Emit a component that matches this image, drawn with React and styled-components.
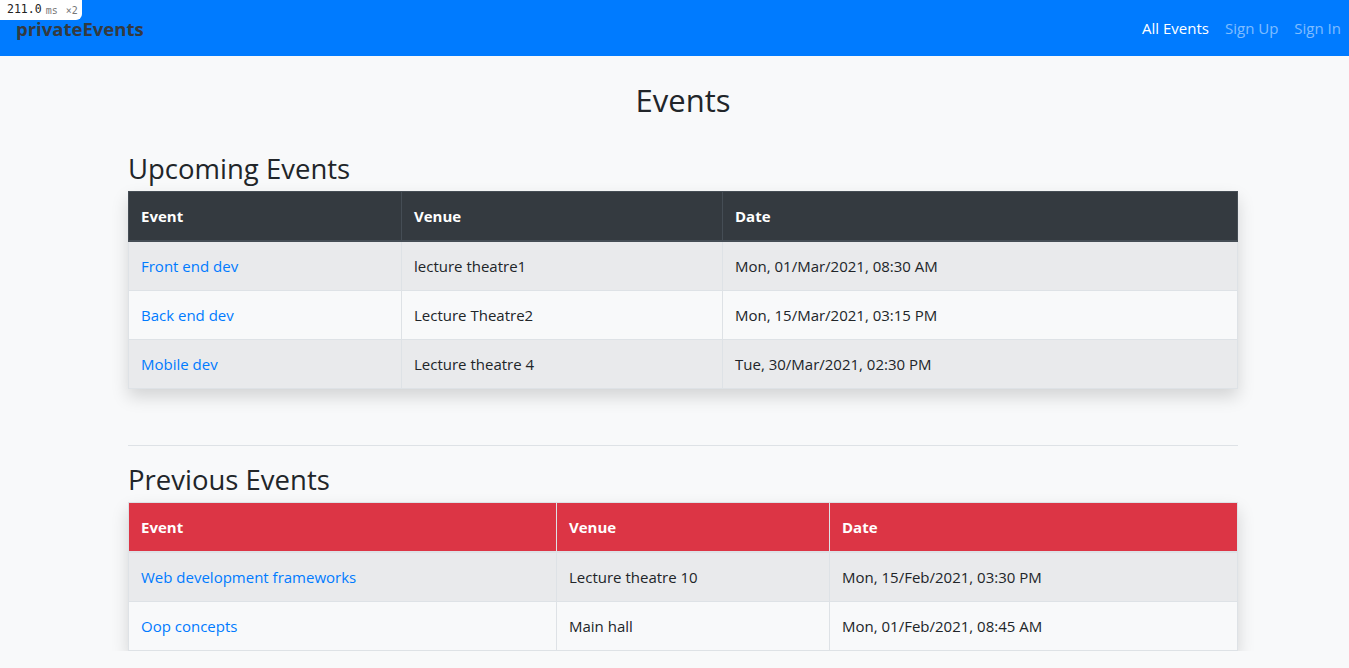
import React from 'react'
import styled, { createGlobalStyle } from 'styled-components'

const GlobalStyle = createGlobalStyle`
  html, body {
    margin: 0;
    padding: 0;
  }
  body {
    background-color: #f8f9fa;
    color: #212529;
    font-family: 'Open Sans', 'Noto Sans', sans-serif;
    font-size: 16px;
    line-height: 1.5;
  }
`

const Badge = styled.div`
  position: absolute;
  top: 0;
  left: 0;
  width: 82px;
  height: 20px;
  background: #fff;
  border-bottom-right-radius: 6px;
  display: flex;
  align-items: center;
  padding-left: 7px;
  gap: 4px;
  font-family: 'DejaVu Sans Mono', monospace;
  font-size: 11.5px;
  color: #222;
  z-index: 10;
  box-sizing: border-box;
  small {
    color: #777;
    font-size: 10px;
    word-spacing: 2px;
  }
`

const NavBar = styled.nav`
  height: 56px;
  background-color: #007bff;
  display: flex;
  align-items: center;
  justify-content: space-between;
  padding: 0 8px 0 16px;
`

const Brand = styled.a`
  font-size: 18.5px;
  font-weight: 700;
  color: #343a40;
  margin-top: 2px;
`

const NavLinks = styled.div`
  display: flex;
  gap: 16px;
`

const NavLink = styled.a`
  font-size: 15px;
  color: ${({ active }) => (active ? '#fff' : 'rgba(255, 255, 255, 0.5)')};
  padding: 8px 0;
`

const Page = styled.main`
  padding-left: 17px;
`

const Container = styled.div`
  width: 1110px;
  margin: 0 auto;
`

const Title = styled.h1`
  margin: 0;
  padding-top: 26px;
  text-align: center;
  font-size: 31px;
  font-weight: 500;
  line-height: 37px;
`

const SectionTitle = styled.h2`
  margin: 0;
  font-size: 27.5px;
  font-weight: 500;
  line-height: 33px;
  padding-top: ${({ first }) => (first ? '33px' : '17px')};
  padding-bottom: 6px;
`

const Table = styled.table`
  width: 100%;
  table-layout: fixed;
  border-collapse: collapse;
  box-shadow: 0 8px 16px rgba(0, 0, 0, 0.15);
  font-size: 15px;
`

const HeadCell = styled.th`
  text-align: left;
  font-weight: 700;
  color: #fff;
  background-color: ${({ tone }) => (tone === 'danger' ? '#dc3545' : '#343a40')};
  border: 1px solid ${({ tone }) => (tone === 'danger' ? '#dee2e6' : '#454d55')};
  border-bottom-width: 2px;
  padding: 12px 12px;
  height: 24px;
  width: ${({ w }) => w};
`

const Row = styled.tr`
  background-color: ${({ odd }) => (odd ? '#e9eaec' : '#f8f9fa')};
`

const Cell = styled.td`
  border: 1px solid #dee2e6;
  padding: 12px 12px;
  height: 24px;
`

const Link = styled.a`
  color: #007bff;
  text-decoration: none;
`

const Rule = styled.hr`
  border: 0;
  border-top: 1px solid #dee2e6;
  margin: 56px 0 0;
`

const upcoming = [
  ['Front end dev', 'lecture theatre1', 'Mon, 01/Mar/2021, 08:30 AM'],
  ['Back end dev', 'Lecture Theatre2', 'Mon, 15/Mar/2021, 03:15 PM'],
  ['Mobile dev', 'Lecture theatre 4', 'Tue, 30/Mar/2021, 02:30 PM'],
]

const previous = [
  ['Web development frameworks', 'Lecture theatre 10', 'Mon, 15/Feb/2021, 03:30 PM'],
  ['Oop concepts', 'Main hall', 'Mon, 01/Feb/2021, 08:45 AM'],
]

const EventsTable = ({ rows, tone, widths }) => (
  <Table>
    <thead>
      <tr>
        <HeadCell tone={tone} w={widths[0]}>Event</HeadCell>
        <HeadCell tone={tone} w={widths[1]}>Venue</HeadCell>
        <HeadCell tone={tone} w={widths[2]}>Date</HeadCell>
      </tr>
    </thead>
    <tbody>
      {rows.map(([name, venue, date], i) => (
        <Row key={name} odd={i % 2 === 0}>
          <Cell>
            <Link href="#">{name}</Link>
          </Cell>
          <Cell>{venue}</Cell>
          <Cell>{date}</Cell>
        </Row>
      ))}
    </tbody>
  </Table>
)

export default function App() {
  return (
    <>
      <GlobalStyle />
      <Badge>
        <span>211.0</span>
        <small>ms ×2</small>
      </Badge>
      <NavBar>
        <Brand>privateEvents</Brand>
        <NavLinks>
          <NavLink active>All Events</NavLink>
          <NavLink>Sign Up</NavLink>
          <NavLink>Sign In</NavLink>
        </NavLinks>
      </NavBar>
      <Page>
        <Container>
          <Title>Events</Title>
          <SectionTitle first>Upcoming Events</SectionTitle>
          <EventsTable rows={upcoming} widths={['248px', '296px', 'auto']} />
          <Rule />
          <SectionTitle>Previous Events</SectionTitle>
          <EventsTable rows={previous} tone="danger" widths={['403px', '248px', 'auto']} />
        </Container>
      </Page>
    </>
  )
}
